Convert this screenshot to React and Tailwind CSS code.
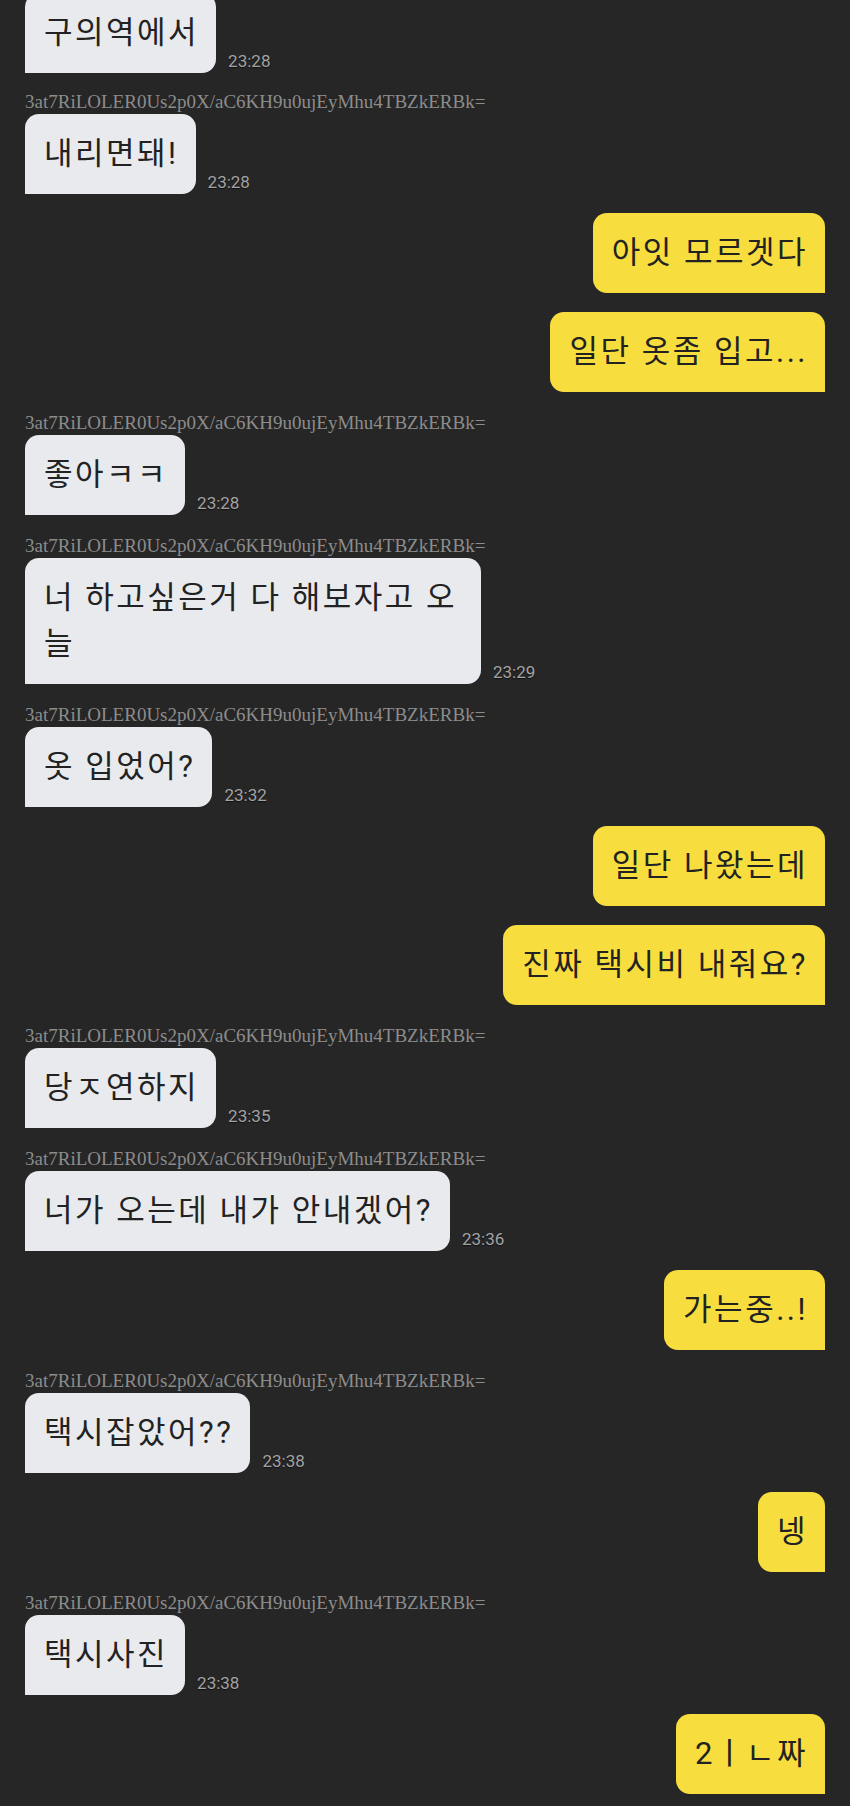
import React from "react";

const NAME = "3at7RiLOLER0Us2p0X/aC6KH9u0ujEyMhu4TBZkERBk=";

const messages = [
  { me: false, text: "구의역에서", time: "23:28" },
  { me: false, text: "내리면돼!", time: "23:28" },
  { me: true, text: "아잇 모르겟다" },
  { me: true, text: "일단 옷좀 입고..." },
  { me: false, text: "좋아ㅋㅋ", time: "23:28" },
  { me: false, text: "너 하고싶은거 다 해보자고 오늘", time: "23:29" },
  { me: false, text: "옷 입었어?", time: "23:32" },
  { me: true, text: "일단 나왔는데" },
  { me: true, text: "진짜 택시비 내줘요?" },
  { me: false, text: "당ㅈ연하지", time: "23:35" },
  { me: false, text: "너가 오는데 내가 안내겠어?", time: "23:36" },
  { me: true, text: "가는중..!" },
  { me: false, text: "택시잡았어??", time: "23:38" },
  { me: true, text: "넹" },
  { me: false, text: "택시사진", time: "23:38" },
  { me: true, text: "2ㅣㄴ짜" },
];

const bubbleFont = { fontFamily: 'Roboto, "Noto Sans CJK KR", sans-serif' };

const Theirs = ({ m, first }) => (
  <div className="flex flex-col items-start">
    {!first && (
      <div
        className="h-[24px] leading-[24px] text-[19px] text-[#8c8c8c] whitespace-nowrap"
        style={{ fontFamily: '"Liberation Serif", serif' }}
      >
        {NAME}
      </div>
    )}
    <div className="flex items-end gap-[12px]">
      <div
        className="max-w-[456px] bg-[#e8eaed] text-[#222] text-[31px] leading-[46px] tracking-[2.5px] pl-[19px] pr-[17px] py-[17px] rounded-[14px] rounded-bl-none"
        style={bubbleFont}
      >
        {m.text}
      </div>
      <div
        className="text-[17px] leading-[20px] text-[#a3a3a3] pb-[2px]"
        style={{ fontFamily: "Roboto, sans-serif", textShadow: "0 1px 1px rgba(0,0,0,0.6)" }}
      >
        {m.time}
      </div>
    </div>
  </div>
);

const Mine = ({ m }) => (
  <div className="flex justify-end">
    <div
      className="bg-[#f7de3e] text-[#222] text-[31px] leading-[46px] tracking-[2.5px] pl-[19px] pr-[17px] py-[17px] rounded-[14px] rounded-br-none"
      style={bubbleFont}
    >
      {m.text}
    </div>
  </div>
);

export default function App() {
  return (
    <div className="w-[850px] h-[1806px] overflow-hidden bg-[#262626]">
      <div className="flex flex-col gap-[19px] px-[25px] -mt-[7px]">
        {messages.map((m, i) => (
          <div key={i} className={i === 1 ? "-mt-[2px]" : ""}>
            {m.me ? <Mine m={m} /> : <Theirs m={m} first={i === 0} />}
          </div>
        ))}
      </div>
    </div>
  );
}
